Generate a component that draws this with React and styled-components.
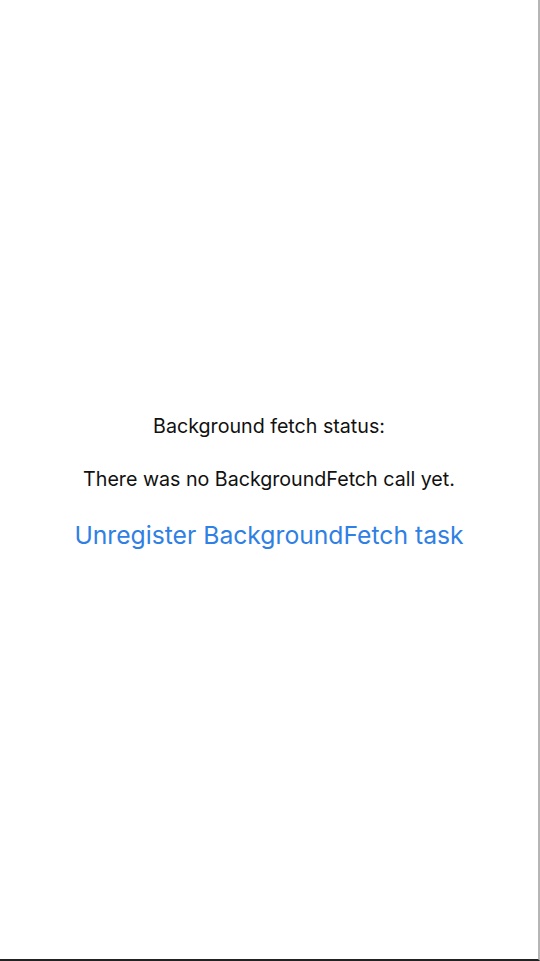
import React from "react";
import styled, { createGlobalStyle } from "styled-components";

const GlobalStyle = createGlobalStyle`
  html, body {
    margin: 0;
    padding: 0;
    background: #fff;
  }
  body {
    font-family: Inter, "Liberation Sans", sans-serif;
  }
`;

const Screen = styled.div`
  box-sizing: border-box;
  width: 540px;
  height: 961px;
  padding-top: 4px;
  border-right: 2px solid #b5b5b5;
  border-bottom: 2px solid #222;
  background: #fff;
  display: flex;
  flex-direction: column;
  align-items: center;
  justify-content: center;
`;

const Label = styled.div`
  font-size: 19.65px;
  line-height: 24px;
  color: #111;
  margin: ${(p) => p.$space || 0};
`;

const LinkButton = styled.button`
  border: 0;
  padding: 0;
  margin-top: 29px;
  background: transparent;
  font-family: inherit;
  font-size: 24.7px;
  line-height: 30px;
  color: #2f80e4;
  cursor: pointer;
`;

export default function App() {
  return (
    <>
      <GlobalStyle />
      <Screen>
        <Label>Background fetch status:</Label>
        <Label $space="29px 0 0">There was no BackgroundFetch call yet.</Label>
        <LinkButton>Unregister BackgroundFetch task</LinkButton>
      </Screen>
    </>
  );
}
